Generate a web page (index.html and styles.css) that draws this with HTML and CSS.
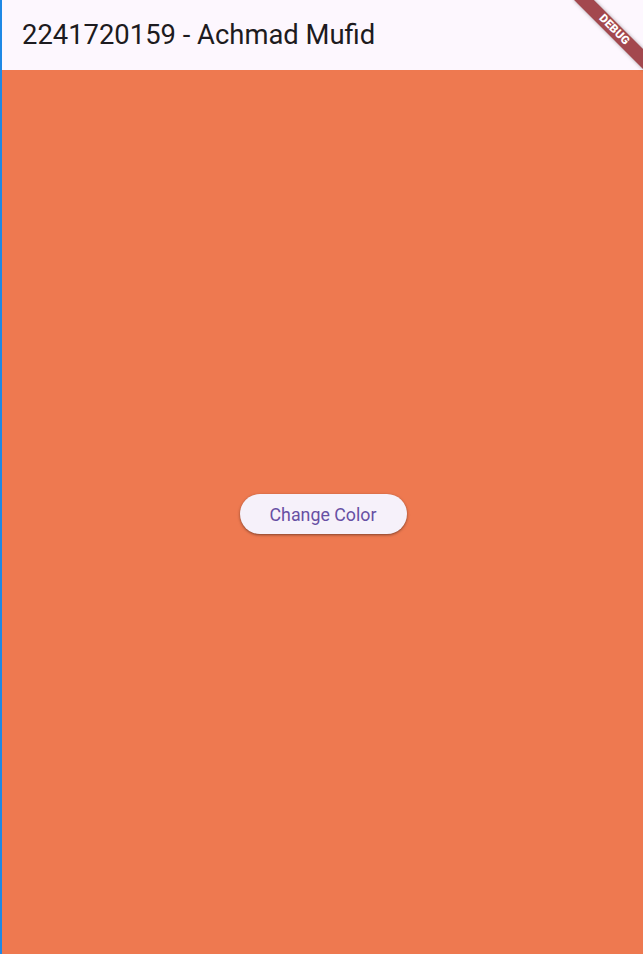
FILE: index.html
```html
<!DOCTYPE html>
<html>
<head>
<meta charset="utf-8">
<link rel="stylesheet" href="styles.css">
</head>
<body>
<div class="app">
  <header class="appbar">
    <h1 class="title">2241720159 - Achmad Mufid</h1>
  </header>
  <main class="body">
    <button class="btn">Change Color</button>
  </main>
  <div class="banner"><span>DEBUG</span></div>
</div>
</body>
</html>
```

FILE: styles.css
```css
html, body {
  margin: 0;
  padding: 0;
  height: 100%;
}
body {
  font-family: Roboto, "Noto Sans", sans-serif;
  overflow: hidden;
}
.app {
  position: relative;
  height: 954px;
  display: flex;
  flex-direction: column;
  border-left: 2px solid #1e88e5;
  box-sizing: border-box;
  overflow: hidden;
}
.appbar {
  height: 70px;
  background: #fdf7fe;
  display: flex;
  align-items: center;
  padding-left: 20px;
  flex: none;
}
.title {
  margin: 0;
  font-weight: 400;
  font-size: 27.4px;
  color: #1d1b20;
  letter-spacing: 0;
}
.body {
  flex: 1;
  background: #ee7950;
  display: flex;
  align-items: center;
  justify-content: center;
}
.btn {
  font-family: Roboto, "Noto Sans", sans-serif;
  font-size: 17.8px;
  color: #6750a4;
  background: #f6f1fa;
  border: none;
  border-radius: 20px;
  height: 40px;
  width: 167px;
  padding: 0;
  margin-left: 1px;
  margin-top: 4px;
  box-shadow: 0 1px 2px rgba(0,0,0,0.3), 0 1px 3px 1px rgba(0,0,0,0.12);
}
.banner {
  position: absolute;
  top: 23px;
  right: -21px;
  width: 100px;
  height: 14px;
  background: #a3484e;
  transform: rotate(45deg);
  display: flex;
  align-items: center;
  justify-content: center;
  box-shadow: 0 0 4px rgba(0,0,0,0.35);
}
.banner span {
  color: #fff;
  font-size: 11.5px;
  font-weight: 900;
  line-height: 1;
  letter-spacing: 0.2px;
}
```
